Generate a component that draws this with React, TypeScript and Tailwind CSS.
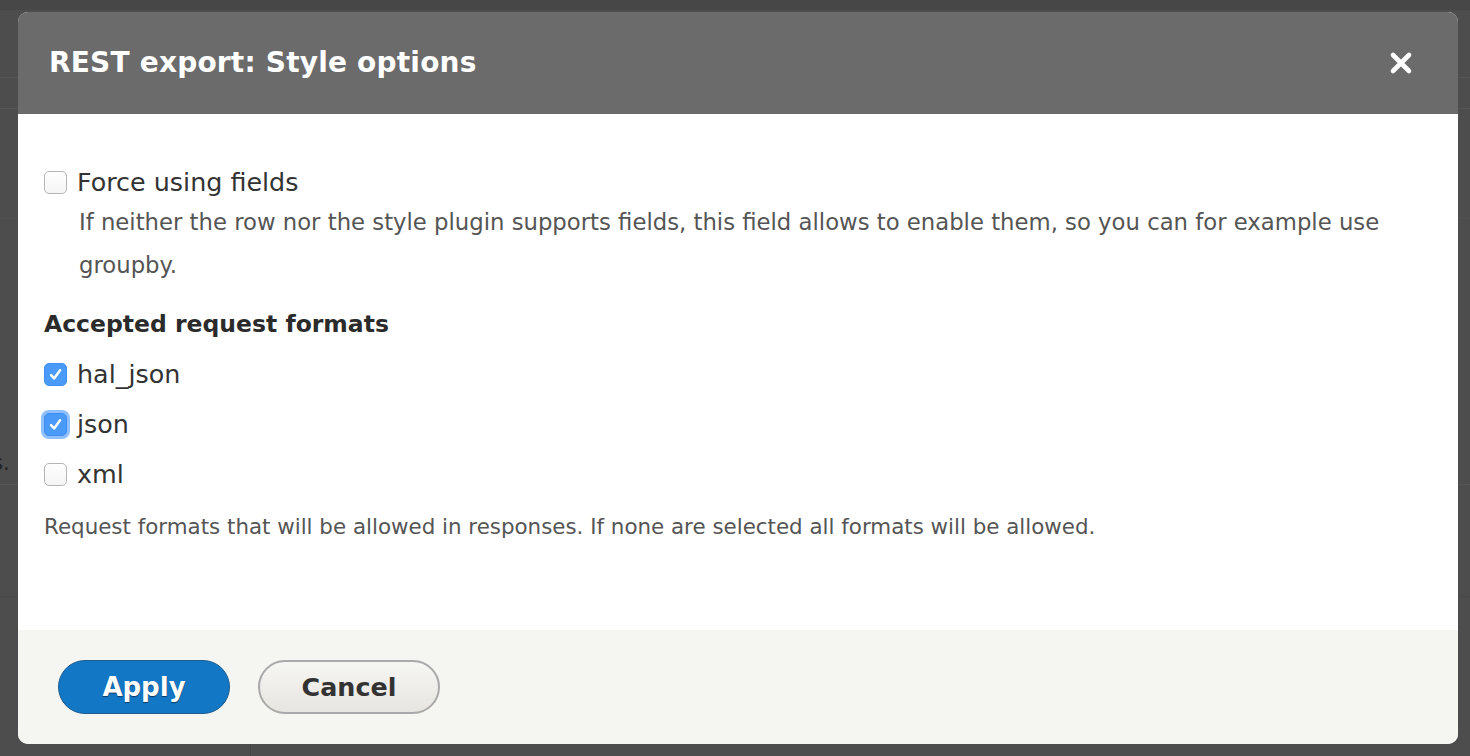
import { useState } from 'react'

const font = { fontFamily: '"DejaVu Sans", "Noto Sans", sans-serif' }

interface CheckProps {
  checked: boolean
  focused?: boolean
  onToggle: () => void
}

function Check({ checked, focused, onToggle }: CheckProps) {
  return (
    <button
      type="button"
      onClick={onToggle}
      className={`relative flex h-[23px] w-[23px] flex-shrink-0 items-center justify-center rounded-[5px] border ${
        checked
          ? 'border-[#3f8ef0] bg-[#4a9bf9]'
          : 'border-[#b5b5b5] bg-gradient-to-b from-white to-[#f4f4f4]'
      } ${focused ? 'ring-[3px] ring-[#8fc0fb]' : ''}`}
    >
      {checked && (
        <svg viewBox="0 0 16 16" className="h-[17px] w-[17px]" fill="none" stroke="white" strokeWidth={2.4} strokeLinecap="round" strokeLinejoin="round">
          <path d="M3.8 8.6l2.9 3.1 5.6-7.6" />
        </svg>
      )}
    </button>
  )
}

export default function App() {
  const [force, setForce] = useState(false)
  const [formats, setFormats] = useState<Record<string, boolean>>({ hal_json: true, json: true, xml: false })

  const toggle = (k: string) => setFormats((p) => ({ ...p, [k]: !p[k] }))

  return (
    <div className="relative h-[756px] w-[1470px] overflow-hidden bg-[#4d4d4d]" style={font}>
      {/* dimmed page behind the overlay */}
      <div className="absolute inset-x-0 top-0 h-[10px] bg-[#474747]" />
      <div className="absolute inset-x-0 top-[77px] h-px bg-[#555555]" />
      <div className="absolute inset-x-0 top-[108px] h-px bg-[#555555]" />
      <div className="absolute inset-x-0 top-[218px] h-px bg-[#525252]" />
      <div className="absolute inset-x-0 top-[484px] h-px bg-[#555555]" />
      <div className="absolute inset-x-0 top-[596px] h-px bg-[#484848]" />
      <div className="absolute left-[250px] top-[744px] h-[12px] w-px bg-[#454545]" />
      <span className="absolute left-[-8px] top-[448px] text-[21px] text-[#222]">s.</span>

      <div className="relative pl-[18px] pt-[12px]">
        <div className="flex h-[732px] w-[1440px] flex-col overflow-hidden rounded-[10px] bg-white">
          <div className="flex h-[102px] flex-shrink-0 items-center justify-between bg-[#6b6b6b] pl-[31px] pr-[44px]">
            <h1 className="text-[28px] font-bold tracking-[0.2px] text-white">REST export: Style options</h1>
            <button type="button" className="flex h-[26px] w-[26px] items-center justify-center">
              <svg viewBox="0 0 24 24" className="h-[24px] w-[24px]" stroke="white" strokeWidth={4.6} strokeLinecap="round">
                <path d="M4 4l16 16M20 4L4 20" />
              </svg>
            </button>
          </div>

          <div className="flex-1 px-[26px] pt-[52px] text-[#333]">
            <label className="flex h-[32px] items-center gap-[10px]">
              <Check checked={force} onToggle={() => setForce(!force)} />
              <span className="text-[25.4px]">Force using fields</span>
            </label>
            <p className="mt-[3px] pl-[35px] text-[22.75px] leading-[43px] text-[#555]">
              If neither the row nor the style plugin supports fields, this field allows to enable them, so you can for example use groupby.
            </p>

            <h2 className="mt-[21px] text-[23.5px] font-bold leading-[32px] text-[#2b2b2b]">Accepted request formats</h2>
            <div className="mt-[18px] flex flex-col gap-[18px]">
              {['hal_json', 'json', 'xml'].map((k) => (
                <label key={k} className="flex h-[32px] items-center gap-[10px]">
                  <Check checked={formats[k]} focused={k === 'json'} onToggle={() => toggle(k)} />
                  <span className="text-[25.4px]">{k}</span>
                </label>
              ))}
            </div>
            <p className="mt-[22px] text-[21.4px] leading-[30px] text-[#555]">
              Request formats that will be allowed in responses. If none are selected all formats will be allowed.
            </p>
          </div>

          <div className="flex h-[114px] flex-shrink-0 items-start gap-[28px] bg-[#f5f5f2] pl-[40px] pt-[30px]">
            <button
              type="button"
              className="h-[54px] w-[172px] rounded-full border border-[#1e5c90] bg-[#1277c5] text-[26px] font-bold text-white [text-shadow:0_1px_1px_#0a3a66]"
            >
              Apply
            </button>
            <button
              type="button"
              className="h-[54px] w-[182px] rounded-full border-2 border-[#a9a9a9] bg-gradient-to-b from-[#f6f6f3] to-[#e7e5e0] text-[25.4px] font-bold text-[#333]"
            >
              Cancel
            </button>
          </div>
        </div>
      </div>
    </div>
  )
}
